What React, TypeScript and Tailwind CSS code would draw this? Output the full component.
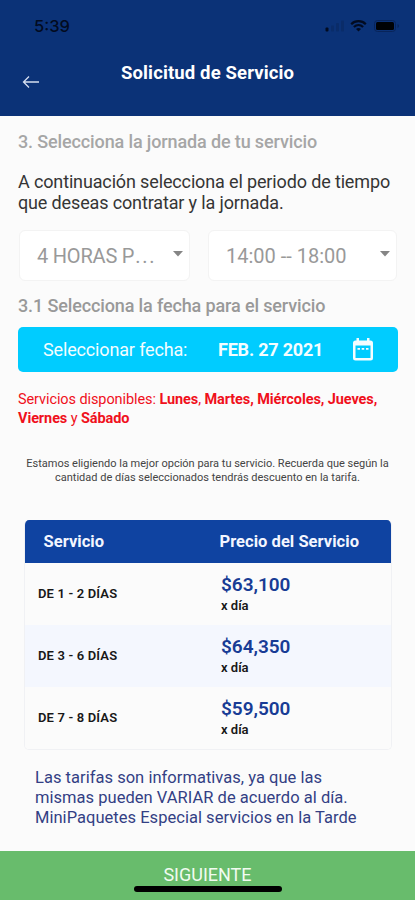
import React from 'react';

interface Rate {
  range: string;
  price: string;
}

const rates: Rate[] = [
  { range: 'DE 1 - 2 DÍAS', price: '$63,100' },
  { range: 'DE 3 - 6 DÍAS', price: '$64,350' },
  { range: 'DE 7 - 8 DÍAS', price: '$59,500' },
];

function StatusIcons() {
  return (
    <svg width="76" height="14" viewBox="0 0 76 14" fill="none">
      {/* signal */}
      <rect x="0.5" y="8.5" width="3" height="4" rx="1" fill="#020b20" />
      <g fill="#0a2c69">
        <rect x="6" y="6.5" width="3" height="6" rx="1" />
        <rect x="11" y="4" width="3" height="8.5" rx="1" />
        <rect x="16" y="1.5" width="3" height="11" rx="1" />
      </g>
      {/* wifi */}
      <g stroke="#020b20" strokeWidth="2.2">
        <path d="M26.2 5.2c4-4 10.6-4 14.6 0" />
        <path d="M28.9 8c2.7-2.5 6.5-2.5 9.2 0" />
      </g>
      <path d="M31 10c1.5-1.3 3.5-1.3 5 0l-2.5 2.6z" fill="#020b20" />
      {/* battery */}
      <rect x="49.5" y="1.5" width="21" height="11" rx="3" stroke="#08245a" />
      <rect x="51" y="3" width="18" height="8" rx="1.5" fill="#000205" />
      <path d="M72.5 5c2 .8 2 3.2 0 4z" fill="#08245a" />
    </svg>
  );
}

function CalendarIcon() {
  return (
    <svg width="20" height="23" viewBox="0 0 20 23" fill="none">
      <path
        fill="#f4fdff"
        fillRule="evenodd"
        d="M3.5 0H6v2.5h8V0h2.5v2.5h1A2.5 2.5 0 0 1 20 5v15a2.5 2.5 0 0 1-2.5 2.5h-15A2.5 2.5 0 0 1 0 20V5a2.5 2.5 0 0 1 2.5-2.5h1zM2.5 7.500v12.500h15V7.500z"
      />
      <path fill="#f4fdff" d="M4.5 10H7v1.8H4.5zM8.7 10h2.5v1.8H8.7zM13 10h2.5v1.8H13z" />
    </svg>
  );
}

function Dropdown({ children, className }: { children: React.ReactNode; className: string }) {
  return (
    <button className={`flex h-[51px] items-center justify-between rounded-md border border-[#f3f3f3] bg-white pl-[17px] text-[#999] ${className}`}>
      <span className="whitespace-nowrap text-[20px] leading-6">{children}</span>
      <svg width="10" height="6" viewBox="0 0 10 6" className="mb-1">
        <path d="M0 0h10L5 5.5z" fill="#858585" />
      </svg>
    </button>
  );
}

export default function App() {
  return (
    <div className="flex h-[900px] w-[415px] flex-col overflow-hidden bg-[#fbfbfb] font-['Roboto',sans-serif]">
      <header className="h-[116px] shrink-0 bg-[#0b3277]">
        <div className="flex h-[52px] items-center justify-between pl-[34px] pr-[14px]">
          <span className="font-['Inter',sans-serif] text-[16.5px] font-medium leading-5 text-[#020b20]">5:39</span>
          <StatusIcons />
        </div>
        <div className="flex pl-[22px]">
          <svg width="18" height="14" viewBox="0 0 18 14" fill="none" stroke="#d5def0" strokeWidth="1.3" className="mt-[23px]">
            <path d="M17 7H1.5M7 1.5L1.5 7 7 12.5" />
          </svg>
          <h1 className="ml-[81px] mt-[9px] whitespace-nowrap text-[18.5px] font-bold leading-6 tracking-[0.13px] text-white">
            Solicitud de Servicio
          </h1>
        </div>
      </header>

      <main className="flex-1 px-[18px] pt-[14px]">
        <h2 className="whitespace-nowrap text-[18px] font-medium leading-6 tracking-[-0.13px] text-[#a6a6a6]">
          3. Selecciona la jornada de tu servicio
        </h2>
        <p className="mt-[17px] whitespace-nowrap text-[18px] leading-[21px] tracking-[-0.14px] text-[#353535]">
          A continuación selecciona el periodo de tiempo
          <br />
          que deseas contratar y la jornada.
        </p>

        <div className="mt-[17px] flex justify-between pl-px">
          <Dropdown className="w-[171px] pr-[6px]">
            <span className="tracking-[-0.2px]">4 HORAS P</span>
            <span className="ml-px tracking-[1.7px]">...</span>
          </Dropdown>
          <Dropdown className="w-[189px] pr-[6px]">14:00 -- 18:00</Dropdown>
        </div>

        <h2 className="mt-[13px] whitespace-nowrap text-[18px] font-medium leading-6 tracking-[-0.13px] text-[#999]">
          3.1 Selecciona la fecha para el servicio
        </h2>

        <button className="mt-[9px] flex h-[45px] w-[380px] items-center rounded-[5px] bg-[#00ccff] pl-[25px] text-[18px] leading-6 tracking-[-0.15px] text-[#f4fdff]">
          <span className="w-[175px] whitespace-nowrap text-left">Seleccionar fecha:</span>
          <span className="w-[134.5px] whitespace-nowrap text-left font-bold tracking-[-0.2px]">FEB. 27 2021</span>
          <CalendarIcon />
        </button>

        <p className="mt-[18px] whitespace-nowrap text-[14.5px] leading-[19px] tracking-[-0.09px] text-[#f0101c]">
          Servicios disponibles: <b>Lunes</b>, <b>Martes, Miércoles, Jueves,</b>
          <br />
          <b>Viernes</b> y <b>Sábado</b>
        </p>

        <p className="mt-[29px] whitespace-nowrap text-center text-[11px] leading-[14px] text-[#444]">
          Estamos eligiendo la mejor opción para tu servicio. Recuerda que según la
          <br />
          cantidad de días seleccionados tendrás descuento en la tarifa.
        </p>

        <section className="ml-[6px] mt-[35px] w-[368px] overflow-hidden rounded-[5px] border border-t-0 border-[#f0f1f4]">
          <div className="flex h-[43px] items-center bg-[#0f43a1] pl-[18.5px] text-[16.5px] font-bold leading-5 tracking-[0.04px] text-[#f3f6ff]">
            <span className="w-[176px]">Servicio</span>
            <span className="whitespace-nowrap">Precio del Servicio</span>
          </div>
          {rates.map(rate => (
            <div key={rate.range} className="flex h-[62px] items-center pl-[13px] even:bg-[#fbfbfb] odd:bg-[#f4f7fe]">
              <span className="w-[183px] text-[13px] font-semibold leading-4 tracking-[0.15px] text-[#181818]">{rate.range}</span>
              <div className="whitespace-nowrap">
                <div className="text-[19px] font-semibold leading-[22px] tracking-[-0.03px] text-[#183c95]">{rate.price}</div>
                <div className="text-[13px] font-semibold leading-[19px] text-[#181818]">x día</div>
              </div>
            </div>
          ))}
        </section>

        <p className="ml-[17px] mt-[17.5px] whitespace-nowrap text-[16.5px] leading-5 tracking-[0.03px] text-[#333f84]">
          Las tarifas son informativas, ya que las
          <br />
          mismas pueden VARIAR de acuerdo al día.
          <br />
          MiniPaquetes Especial servicios en la Tarde
        </p>
      </main>

      <footer className="flex h-[49px] shrink-0 flex-col items-center bg-[#68bc6c]">
        <button className="mt-[13px] text-[18px] leading-[22px] text-[#f1fbf1]">SIGUIENTE</button>
        <div className="h-[6px] w-[148px] shrink-0 rounded-full bg-black" />
      </footer>
    </div>
  );
}
